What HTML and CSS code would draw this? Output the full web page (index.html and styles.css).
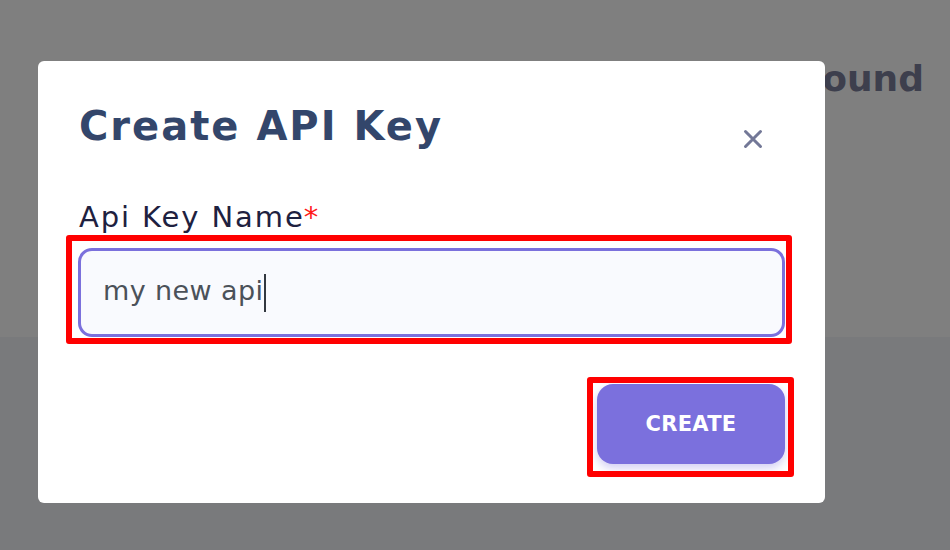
FILE: index.html
```html
<!DOCTYPE html>
<html lang="en">
<head>
<meta charset="utf-8">
<title>Create API Key</title>
<link rel="stylesheet" href="styles.css">
</head>
<body>
<div class="page">
  <header class="page-top">
    <h2 class="page-heading">No api keys found</h2>
  </header>
  <main class="page-bottom"></main>
</div>

<div class="overlay"></div>

<section class="modal" role="dialog" aria-labelledby="modal-title">
  <div class="modal-head">
    <h1 class="modal-title" id="modal-title">Create API Key</h1>
    <button class="close-btn" aria-label="Close">
      <svg viewBox="0 0 20 20" width="20" height="20"><path d="M2.5 2.5 L17.5 17.5 M17.5 2.5 L2.5 17.5" stroke="#737897" stroke-width="3" stroke-linecap="round" fill="none"/></svg>
    </button>
  </div>
  <label class="field-label">Api Key Name<span class="req">*</span></label>
  <div class="field-input" role="textbox">my new api<span class="caret"></span></div>
  <div class="modal-foot">
    <button class="create-btn">CREATE</button>
  </div>
</section>

<div class="mark mark-input"></div>
<div class="mark mark-button"></div>
</body>
</html>
```
FILE: styles.css
```css
* { box-sizing: border-box; }
html, body { margin: 0; padding: 0; }
body {
  width: 950px;
  height: 550px;
  overflow: hidden;
  font-family: "DejaVu Sans", "Open Sans", sans-serif;
  position: relative;
}
.page {
  display: flex;
  flex-direction: column;
  height: 550px;
}
.page-top {
  height: 337px;
  background: #ffffff;
  display: flex;
  justify-content: flex-end;
  padding: 57px 26px 0 0;
}
.page-heading {
  margin: 0;
  font-size: 36px;
  line-height: 44px;
  font-weight: 700;
  color: #7a7f9a;
}
.page-bottom {
  flex: 1;
  background: #f3f5f9;
}
.overlay {
  position: absolute;
  inset: 0;
  background: rgba(0, 0, 0, 0.5);
}
.modal {
  position: absolute;
  left: 38px;
  top: 61px;
  width: 787px;
  height: 442px;
  background: #ffffff;
  border-radius: 6px;
  padding: 37px 40px 39px 40px;
  display: flex;
  flex-direction: column;
}
.modal-head {
  display: flex;
  justify-content: space-between;
  align-items: flex-start;
}
.modal-title {
  margin: 0 0 0 1px;
  font-size: 40px;
  line-height: 56px;
  font-weight: 700;
  color: #33466b;
  letter-spacing: 2px;
}
.close-btn {
  margin: 31px 22px 0 0;
  padding: 0;
  border: 0;
  background: none;
  width: 20px;
  height: 20px;
  display: block;
}
.close-btn svg { display: block; }
.field-label {
  margin: 45px 0 0 1px;
  font-size: 29px;
  line-height: 36px;
  font-weight: 400;
  color: #1e2140;
  letter-spacing: 1.9px;
}
.req {
  color: #ff1a1a;
  margin-left: -1px;
}
.field-input {
  margin-top: 13px;
  height: 89px;
  border: 3px solid #7b70dc;
  border-radius: 14px;
  background: #f9fafe;
  padding: 0 22px 5px 22px;
  display: flex;
  align-items: center;
  font-size: 27px;
  letter-spacing: 0.4px;
  color: #4b5159;
}
.caret {
  display: block;
  width: 2px;
  height: 38px;
  background: #333840;
  margin-left: 1px;
  margin-top: 5px;
}
.modal-foot {
  margin-top: 47px;
  display: flex;
  justify-content: flex-end;
}
.create-btn {
  width: 188px;
  height: 80px;
  border: 0;
  border-radius: 16px;
  background: #7b70dd;
  color: #ffffff;
  font-family: "DejaVu Sans", "Open Sans", sans-serif;
  font-size: 21px;
  font-weight: 700;
  letter-spacing: 0.3px;
  box-shadow: 0 4px 10px rgba(123, 112, 221, 0.35);
}
.mark {
  position: absolute;
  border: 6px solid #ff0000;
  border-radius: 3px;
}
.mark-input {
  left: 66px;
  top: 235px;
  width: 726px;
  height: 109px;
}
.mark-button {
  left: 587px;
  top: 377px;
  width: 207px;
  height: 100px;
}
```
